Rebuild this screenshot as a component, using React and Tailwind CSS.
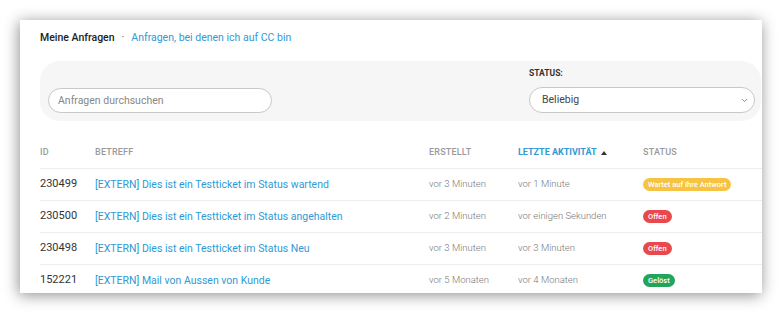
import { ChevronDown } from 'lucide-react'

const rows = [
  { id: '230499', subject: '[EXTERN] Dies ist ein Testticket im Status wartend', created: 'vor 3 Minuten', last: 'vor 1 Minute', status: 'Wartet auf Ihre Antwort', color: 'bg-[#f6c343]' },
  { id: '230500', subject: '[EXTERN] Dies ist ein Testticket im Status angehalten', created: 'vor 2 Minuten', last: 'vor einigen Sekunden', status: 'Offen', color: 'bg-[#e9484d]' },
  { id: '230498', subject: '[EXTERN] Dies ist ein Testticket im Status Neu', created: 'vor 3 Minuten', last: 'vor 3 Minuten', status: 'Offen', color: 'bg-[#e9484d]' },
  { id: '152221', subject: '[EXTERN] Mail von Aussen von Kunde', created: 'vor 5 Monaten', last: 'vor 4 Monaten', status: 'Gelöst', color: 'bg-[#23a45c]' },
]

const cols = 'grid grid-cols-[55px_334px_89px_125px_1fr] items-center'

export default function App() {
  return (
    <div className="w-[782px] h-[313px] bg-white pt-[20px] pl-[20px] font-['Roboto',sans-serif]">
      <div className="w-[742px] h-[273px] bg-white overflow-hidden shadow-[-1px_2px_14px_rgba(0,0,0,0.45)] pl-[20px]">
        <div className="pt-[11px] h-[41px] flex items-start text-[10.5px] leading-[13px]">
          <span className="font-medium text-[#222]">Meine Anfragen</span>
          <span className="mx-[7px] text-[#555]">·</span>
          <a className="text-[#2f9ad4]">Anfragen, bei denen ich auf CC bin</a>
        </div>

        <div className="h-[60px] w-[721px] rounded-[20px] bg-[#f6f6f6] flex">
          <div className="pl-[8px] pt-[27px]">
            <div className="w-[224px] h-[25px] rounded-full border border-[#c8c8c8] bg-white flex items-center px-[9px] text-[10.5px] text-[#888]">
              Anfragen durchsuchen
            </div>
          </div>
          <div className="ml-[257px] pt-[7px]">
            <div className="text-[8.5px] font-bold text-[#333] leading-[10px]">STATUS:</div>
            <div className="mt-[9px] w-[226px] h-[26px] rounded-full border border-[#c8c8c8] bg-white flex items-center justify-between pl-[12px] pr-[5px] text-[10.5px] text-[#444]">
              <span>Beliebig</span>
              <ChevronDown size={9} strokeWidth={2} className="text-[#666]" />
            </div>
          </div>
        </div>

        <div className="mt-[16px]">
          <div className={`${cols} h-[32px] border-b border-[#eeeeee] text-[9px] font-medium text-[#9a9a9a] tracking-[0.2px]`}>
            <span>ID</span>
            <span>BETREFF</span>
            <span>ERSTELLT</span>
            <span className="text-[#2f9ad4] font-bold tracking-normal flex items-center gap-[4px]">
              LETZTE AKTIVITÄT
              <svg width="6" height="4" viewBox="0 0 6 4"><path d="M0 4 L3 0 L6 4 Z" fill="#333" /></svg>
            </span>
            <span>STATUS</span>
          </div>
          {rows.map((r) => (
            <div key={r.id} className={`${cols} h-[32px] border-b border-[#eeeeee]`}>
              <span className="text-[11px] text-[#333]">{r.id}</span>
              <a className="text-[10.5px] text-[#2f9ad4]">{r.subject}</a>
              <span className="text-[9.5px] font-light text-[#777]">{r.created}</span>
              <span className="text-[9.5px] font-light text-[#777]">{r.last}</span>
              <span className="flex">
                <span className={`${r.color} rounded-full px-[5px] text-[7.5px] leading-[13px] font-medium text-white`}>{r.status}</span>
              </span>
            </div>
          ))}
        </div>
      </div>
    </div>
  )
}
